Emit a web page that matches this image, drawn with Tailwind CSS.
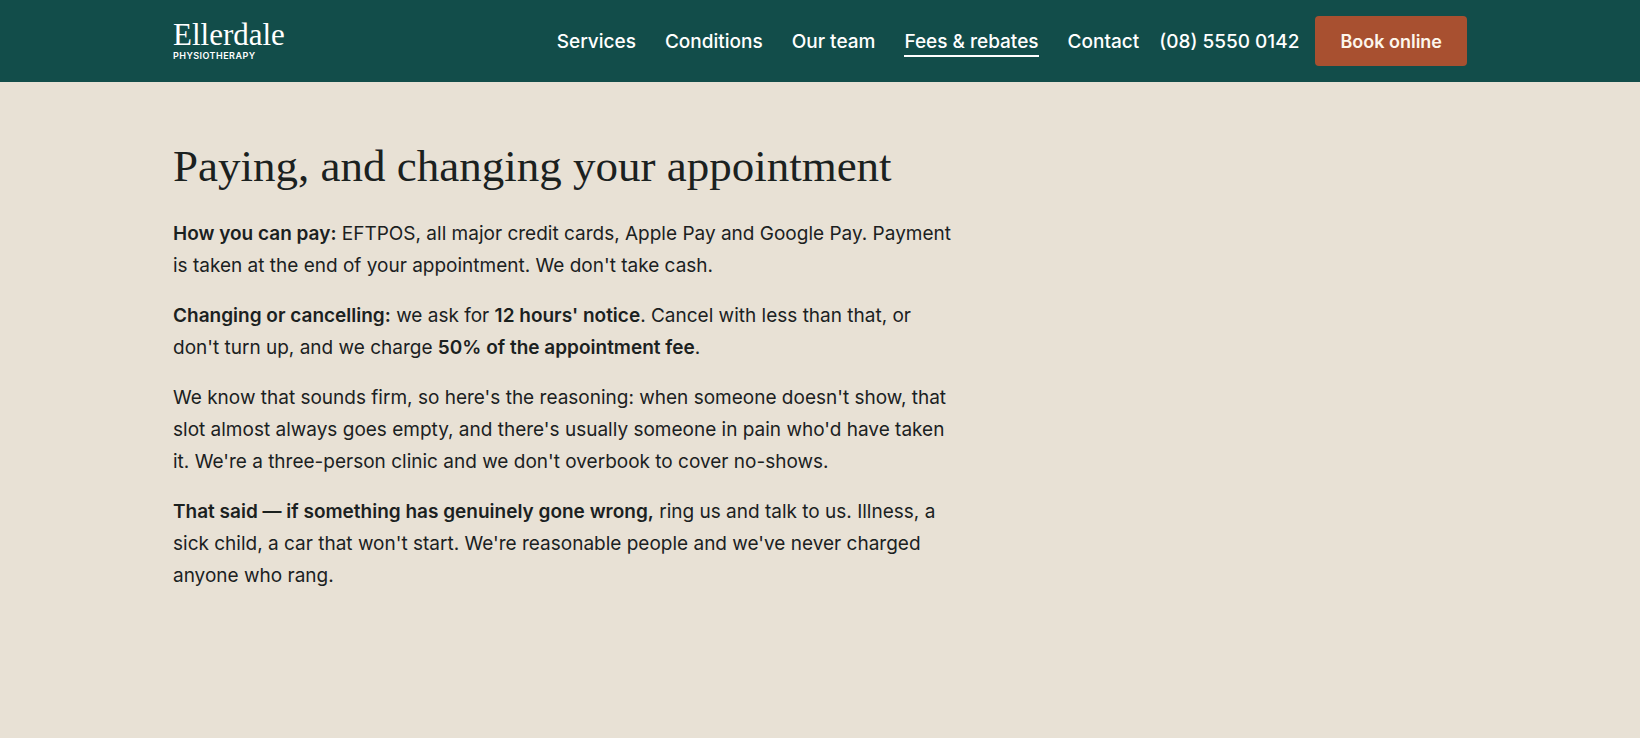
<!DOCTYPE html>
<html lang="en">
<head>
    <meta charset="UTF-8">
    <meta name="viewport" content="width=device-width, initial-scale=1.0">
    <title>Fees & rebates | Ellerdale Physiotherapy</title>
    <script src="https://cdn.jsdelivr.net/npm/@tailwindcss/browser@4"></script>
</head>
<body class="min-h-screen bg-[#e8e1d5] text-[#1b211f] font-['Inter',sans-serif] text-[19px]">

    <!-- Header -->
    <header class="bg-[#124d4a] text-white">
        <div class="max-w-[1344px] mx-auto px-[25px] py-4 flex items-center justify-between">
            <a href="#" class="flex flex-col">
                <span class="font-['Liberation_Serif',serif] text-[31px] leading-[30px]">Ellerdale</span>
                <span class="text-[9px] leading-3 font-semibold tracking-wider uppercase">Physiotherapy</span>
            </a>

            <div class="flex items-center">
                <nav class="flex items-center gap-[29px] font-medium leading-[26px]">
                    <a href="#" class="pt-1 border-b-2 border-transparent">Services</a>
                    <a href="#" class="pt-1 border-b-2 border-transparent">Conditions</a>
                    <a href="#" class="pt-1 border-b-2 border-transparent">Our team</a>
                    <a href="#" class="pt-1 border-b-2 border-white" aria-current="page">Fees & rebates</a>
                    <a href="#" class="pt-1 border-b-2 border-transparent">Contact</a>
                </nav>
                <a href="tel:+61855500142" class="ml-5 pt-[2px] leading-[26px] font-medium">(08) 5550 0142</a>
                <a href="#" class="ml-4 px-[25px] h-[50px] flex items-center rounded bg-[#a85030] text-[18px] font-semibold text-[#fdf6ec]">Book online</a>
            </div>
        </div>
    </header>

    <!-- Payment and cancellation policy -->
    <main class="max-w-[1344px] mx-auto px-[25px] pt-[57px] pb-24">
        <h2 class="font-['Liberation_Serif',serif] text-[45px] leading-[54px] mb-[25px]">Paying, and changing your appointment</h2>
        <div class="max-w-[780px] leading-8 space-y-[18px]">
            <p><strong class="font-semibold">How you can pay:</strong> EFTPOS, all major credit cards, Apple Pay and Google Pay. Payment is taken at the end of your appointment. We don't take cash.</p>
            <p><strong class="font-semibold">Changing or cancelling:</strong> we ask for <strong class="font-semibold">12 hours' notice</strong>. Cancel with less than that, or don't turn up, and we charge <strong class="font-semibold">50% of the appointment fee</strong>.</p>
            <p>We know that sounds firm, so here's the reasoning: when someone doesn't show, that slot almost always goes empty, and there's usually someone in pain who'd have taken it. We're a three-person clinic and we don't overbook to cover no-shows.</p>
            <p><strong class="font-semibold">That said — if something has genuinely gone wrong,</strong> ring us and talk to us. Illness, a sick child, a car that won't start. We're reasonable people and we've never charged anyone who rang.</p>
        </div>
    </main>

</body>
</html>
